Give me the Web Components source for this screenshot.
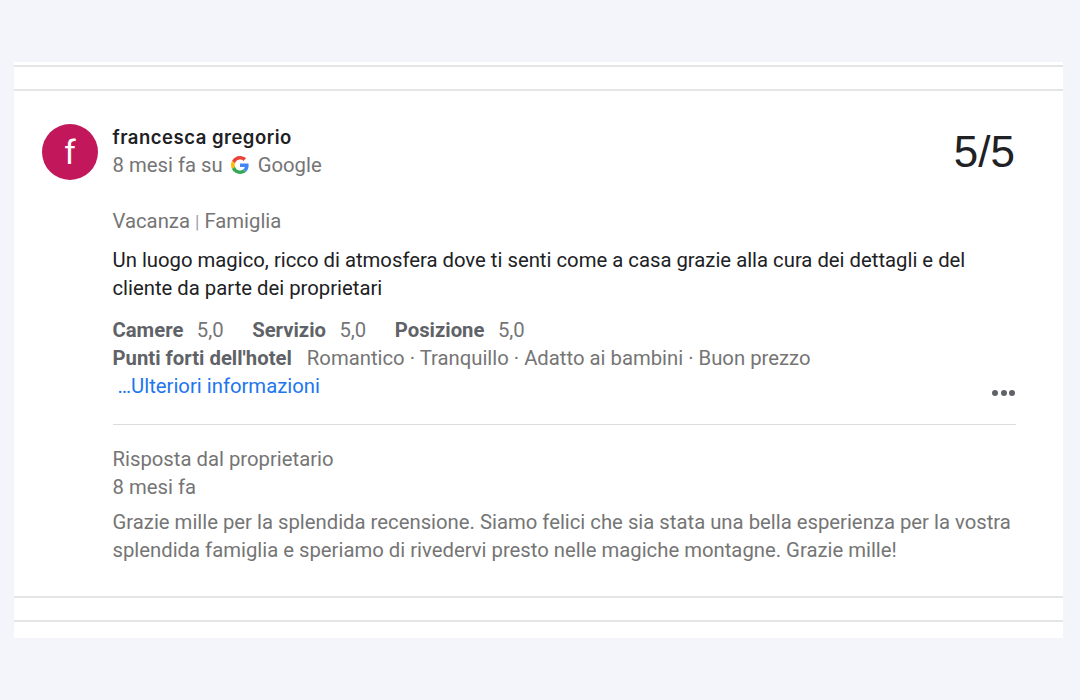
<!DOCTYPE html>
<html lang="it">
<head>
<meta charset="utf-8">
<title>Recensione</title>
<style>
  html, body { margin: 0; height: 100%; }
  body { background: #f3f5fb; font-family: Roboto, "Liberation Sans", sans-serif; }
  .bar { font-size: 18px; color: #9aa0a6; }
</style>
</head>
<body>
<review-list>
  <review-card name="francesca gregorio" when="8 mesi fa su" source="Google" score="5/5" initial="f">
    <span slot="trip">Vacanza <span class="bar">|</span> Famiglia</span>
    <span slot="text">Un luogo magico, ricco di atmosfera dove ti senti come a casa grazie alla cura dei dettagli e del cliente da parte dei proprietari</span>
    <span slot="reply">Grazie mille per la splendida recensione. Siamo felici che sia stata una bella esperienza per la vostra splendida famiglia e speriamo di rivedervi presto nelle magiche montagne. Grazie mille!</span>
  </review-card>
</review-list>

<script>
class ReviewList extends HTMLElement {
  constructor() {
    super();
    this.attachShadow({ mode: 'open' });
    this.shadowRoot.innerHTML = `
<style>
  :host { display: block; padding-top: 62px; margin-left: 14px; width: 1049px; }
  .strip { background: #fff; }
  .top { height: 3px; }
  .gap { height: 22px; border-top: 2px solid #e4e5e7; }
  .cap { height: 16px; border-top: 2px solid #e4e5e7; }
  .main { background: #fff; border-top: 2px solid #e4e5e7; }
</style>
<div class="strip top"></div>
<div class="strip gap"></div>
<div class="main"><slot></slot></div>
<div class="strip gap"></div>
<div class="strip cap"></div>`;
  }
}

class GoogleMark extends HTMLElement {
  constructor() {
    super();
    this.attachShadow({ mode: 'open' });
    this.shadowRoot.innerHTML = `
<style>
  :host { display: inline-flex; width: 18px; height: 18px; }
</style>
<svg viewBox="0 0 48 48" width="18" height="18">
  <path fill="#EA4335" d="M24 9.5c3.5 0 6.7 1.2 9.2 3.6l6.9-6.9C35.9 2.4 30.5 0 24 0 14.6 0 6.5 5.4 2.6 13.2l8 6.2C12.4 13.7 17.700 9.500 24 9.500z"/>
  <path fill="#4285F4" d="M47 24.500c0-1.600-.1-3.100-.4-4.500H24v9h12.900c-.6 3-2.200 5.500-4.700 7.200l7.700 6C44.400 38 47 31.800 47 24.500z"/>
  <path fill="#FBBC05" d="M10.500 28.600c-.5-1.400-.8-3-.8-4.600s.3-3.200.8-4.600l-8-6.200C.9 16.500 0 20.100 0 24s.9 7.500 2.600 10.800l7.900-6.200z"/>
  <path fill="#34A853" d="M24 48c6.500 0 11.900-2.100 15.900-5.800l-7.700-6c-2.200 1.400-4.900 2.300-8.200 2.300-6.300 0-11.600-4.200-13.500-9.900l-8 6.200C6.500 42.600 14.600 48 24 48z"/>
</svg>`;
  }
}

class ReviewCard extends HTMLElement {
  constructor() {
    super();
    this.attachShadow({ mode: 'open' });
    this.shadowRoot.innerHTML = `
<style>
  :host { display: block; padding: 33px 47px 32px 28px; color: #757575; font: 20.3px/28px Roboto, "Liberation Sans", sans-serif; }
  .layout { display: grid; grid-template-columns: 56px 1fr; column-gap: 14.5px; }
  .avatar { width: 56px; height: 56px; border-radius: 50%; background: #c2185b; color: #fff; display: flex; align-items: center; justify-content: center; font-size: 33px; line-height: 1; }
  .head { display: flex; justify-content: space-between; height: 63px; }
  .name { color: #202124; font: 600 18.5px/22px Inter, Roboto, sans-serif; letter-spacing: .5px; margin-top: 2px; }
  .sub { display: flex; align-items: center; gap: 8.5px; line-height: 28px; margin-top: 3px; }
  .score { color: #202124; font: 44px/56px "Liberation Sans", Arial, sans-serif; padding-right: 1px; }
  .trip { margin-top: 20px; }
  .text { color: #202124; margin-top: 10px; width: 870px; }
  .facts { margin-top: 14px; position: relative; }
  .facts b { color: #5f6368; font-weight: 700; }
  .row { display: flex; }
  .row b { margin-right: 13.5px; }
  .row span { margin-right: 28.5px; }
  .row.forti b { margin-right: 15px; }
  .more { color: #2176ee; padding-left: 5px; }
  .dots { position: absolute; right: 1px; bottom: 0; display: flex; gap: 2.5px; padding-bottom: 4px; }
  .dots i { width: 6px; height: 6px; border-radius: 50%; background: #5f6368; }
  hr { border: 0; border-top: 1px solid #dadce0; margin: 24px 0 20px; }
  .reply { margin-top: 7px; }
</style>
<div class="layout">
  <div class="avatar"><span id="initial"></span></div>
  <div>
    <div class="head">
      <div>
        <div class="name" id="name"></div>
        <div class="sub"><span id="when"></span><google-mark></google-mark><span id="source"></span></div>
      </div>
      <div class="score" id="score"></div>
    </div>
    <div class="trip"><slot name="trip"></slot></div>
    <div class="text"><slot name="text"></slot></div>
    <div class="facts">
      <div class="row"><b>Camere</b><span>5,0</span><b>Servizio</b><span>5,0</span><b>Posizione</b><span>5,0</span></div>
      <div class="row forti"><b>Punti forti dell'hotel</b><span>Romantico · Tranquillo · Adatto ai bambini · Buon prezzo</span></div>
      <div class="more">…Ulteriori informazioni</div>
      <div class="dots"><i></i><i></i><i></i></div>
    </div>
    <hr>
    <div>Risposta dal proprietario</div>
    <div>8 mesi fa</div>
    <div class="reply"><slot name="reply"></slot></div>
  </div>
</div>`;
  }

  connectedCallback() {
    for (const key of ['initial', 'name', 'when', 'source', 'score']) {
      this.shadowRoot.querySelector('#' + key).textContent = this.getAttribute(key);
    }
  }
}

customElements.define('review-list', ReviewList);
customElements.define('google-mark', GoogleMark);
customElements.define('review-card', ReviewCard);
</script>
</body>
</html>
